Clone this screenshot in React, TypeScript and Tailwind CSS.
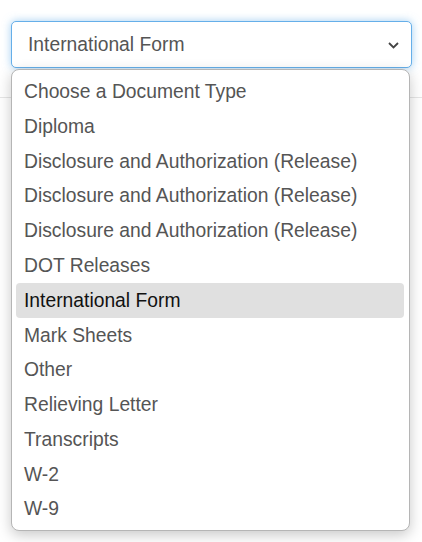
import React from "react";

const items = [
  "Choose a Document Type",
  "Diploma",
  "Disclosure and Authorization (Release)",
  "Disclosure and Authorization (Release)",
  "Disclosure and Authorization (Release)",
  "DOT Releases",
  "International Form",
  "Mark Sheets",
  "Other",
  "Relieving Letter",
  "Transcripts",
  "W-2",
  "W-9",
];

export default function App() {
  return (
    <div
      className="relative w-[422px] h-[542px] bg-white overflow-hidden"
      style={{ fontFamily: '"Liberation Sans", Arial, sans-serif' }}
    >
      <div className="h-[98px] border-b border-[#e6e6e6] pt-[21px] pl-[11px] pr-[10px]">
        <div className="flex items-center h-[47px] rounded-[5px] border border-[#66afe9] bg-white pl-[16px] pr-[12px] shadow-[0_0_8px_rgba(102,175,233,0.6)]">
          <span className="flex-1 mt-[1px] text-[19.3px] text-[#555555]">International Form</span>
          <svg width="11" height="7" viewBox="0 0 11 7" className="mt-[2px]">
            <path d="M1 1 L5.5 5.5 L10 1" fill="none" stroke="#444" strokeWidth="1.8" />
          </svg>
        </div>
      </div>
      <div className="absolute left-[11px] top-[69px] w-[399px] rounded-[8px] border border-[#b5b5b5] bg-white py-[4px] pl-[4px] pr-[5px] shadow-[0_4px_14px_rgba(0,0,0,0.22)]">
        {items.map((t, i) => (
          <div
            key={i}
            className={
              "flex items-center h-[34.8px] rounded-[4px] pl-[8px] pr-[7px] text-[19.3px] " +
              (i === 6 ? "bg-[#e0e0e0] text-[#111111]" : "text-[#555555]")
            }
          >
            <span className="mt-[2px]">{t}</span>
          </div>
        ))}
      </div>
    </div>
  );
}
